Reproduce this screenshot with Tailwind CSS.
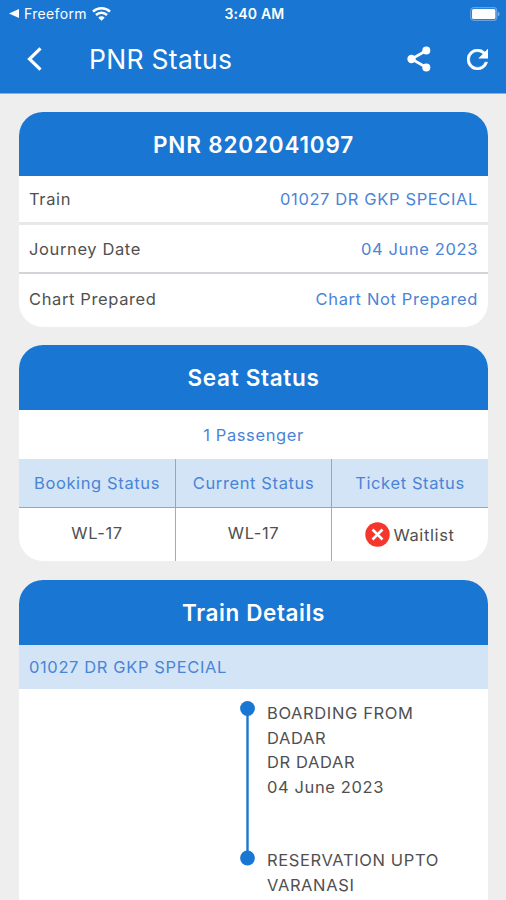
<!DOCTYPE html>
<html lang="en">
<head>
<meta charset="utf-8">
<title>PNR Status</title>
<script src="https://cdn.jsdelivr.net/npm/@tailwindcss/browser@4"></script>
</head>
<body class="h-[900px] w-[506px] overflow-hidden bg-[#eeeeee] font-[Inter,sans-serif] text-[16.500px] tracking-[0.620px] text-[#505050]">
<header class="h-[94px] border-b border-[#7fb2e6] bg-[#1976d2] text-white">
  <div class="grid h-[27px] grid-cols-3 items-center pr-[6px] pl-[9px] text-[14px] leading-none tracking-[0.1px]">
    <div class="flex items-center">
      <svg class="mr-[5px] h-[9px] w-[10px] shrink-0" viewBox="0 0 10 9" fill="currentColor"><path d="M0 4.500 10 0v9z"/></svg>
      <span class="tracking-[0.350px]">Freeform</span>
      <svg class="ml-[5px] h-[14px] w-[19px] shrink-0" viewBox="0 0 19 14" fill="none" stroke="currentColor" stroke-width="2.500"><path d="M1 4.700a12.300 12.300 0 0 1 17 0M4 8a8 8 0 0 1 11 0"/><path d="M9.500 13.800 6.300 10.700a4.500 4.500 0 0 1 6.400 0z" fill="currentColor" stroke="none"/></svg>
    </div>
    <div class="text-center font-semibold tracking-[0.200px]">3:40 AM</div>
    <div class="flex justify-end">
      <svg class="h-[14px] w-[30px]" viewBox="0 0 30 14"><rect x=".7" y=".7" width="26" height="12.600" rx="3" fill="none" stroke="#64a2e0" stroke-width="1.200"/><rect x="2" y="2" width="23.400" height="10" rx="1.500" fill="#fff"/><path d="M27.700 4.500q2 .8 2 2.500t-2 2.500z" fill="#75ade4"/></svg>
    </div>
  </div>
  <div class="flex h-[66px] items-center pr-[18px] pl-[27px]">
    <svg class="h-[24px] w-[15px] -translate-y-[1px]" viewBox="0 0 15 24" fill="none" stroke="currentColor" stroke-width="3.200"><path d="M13.500 1.300 2.500 12l11 10.700"/></svg>
    <h1 class="ml-[47px] flex-1 pb-[1px] text-[26.500px] leading-none tracking-[0.280px]">PNR Status</h1>
    <svg class="h-[26px] w-[24px] -translate-y-[1px]" viewBox="0 0 24 26" fill="currentColor"><path d="M19.500 4.500 4.500 13l15 8.500" fill="none" stroke="currentColor" stroke-width="2.600"/><circle cx="19.300" cy="4.500" r="4"/><circle cx="4.500" cy="13" r="4.200"/><circle cx="19.300" cy="21.500" r="4"/></svg>
    <svg class="ml-[36px] h-[21px] w-[21px] -translate-y-[1px]" viewBox="4 4 16 16" fill="currentColor" stroke="currentColor" stroke-width=".4"><path d="M17.650 6.350A7.960 7.960 0 0 0 12 4a8 8 0 1 0 7.730 10h-2.080A6 6 0 1 1 12 6c1.660 0 3.140.69 4.220 1.780L13 11h7V4z"/></svg>
  </div>
</header>
<main class="flex flex-col gap-[19px] pr-[18px] pl-[19px] pt-[18px]">
  <section class="h-[215px] overflow-hidden rounded-[24px] bg-white">
    <h2 class="flex h-[64px] items-center justify-center bg-[#1976d2] pt-[1px] text-[22.500px] font-semibold tracking-[0.820px] text-white">PNR 8202041097</h2>
    <div class="flex h-[49px] items-center justify-between border-b-3 border-[#e6e8ea] px-[10px] pt-[1px]"><span>Train</span><span class="text-[#4a84d6]">01027 DR GKP SPECIAL</span></div>
    <div class="flex h-[49px] items-center justify-between border-b-2 border-[#d2d5da] px-[10px] pt-[2px]"><span>Journey Date</span><span class="text-[#4a84d6]">04 June 2023</span></div>
    <div class="flex h-[50px] items-center justify-between px-[10px]"><span>Chart Prepared</span><span class="text-[#4a84d6]">Chart Not Prepared</span></div>
  </section>
  <section class="-mt-[1px] h-[216px] overflow-hidden rounded-[24px] bg-white">
    <h2 class="flex h-[65px] items-center justify-center bg-[#1976d2] text-[22.500px] font-semibold tracking-[0.700px] text-white">Seat Status</h2>
    <div class="flex h-[49px] items-center justify-center pt-[2px] text-[#4a84d6]">1 Passenger</div>
    <div class="grid h-[49px] grid-cols-[157px_156px_156px] divide-x divide-[#93a8be] border-b border-[#93a8be] bg-[#d2e4f5] text-center leading-[49px] text-[#4a84d6]">
      <div>Booking Status</div><div>Current Status</div><div>Ticket Status</div>
    </div>
    <div class="grid h-[53px] grid-cols-[157px_156px_156px] divide-x divide-[#a9a9b1] text-center leading-[50px]">
      <div>WL-17</div><div>WL-17</div>
      <div class="flex items-center justify-center gap-[3px]">
        <svg class="h-[25px] w-[25px]" viewBox="0 0 25 25"><circle cx="12.500" cy="12.500" r="12.200" fill="#f5362c"/><path d="m7.500 7.500 10 10m0-10-10 10" stroke="#fff" stroke-width="2.600"/></svg>
        <span>Waitlist</span>
      </div>
    </div>
  </section>
  <section class="h-[340px] overflow-hidden rounded-t-[24px] bg-white">
    <h2 class="flex h-[65px] items-center justify-center bg-[#1976d2] text-[22.500px] font-semibold tracking-[0.600px] text-white">Train Details</h2>
    <div class="flex h-[44px] items-center bg-[#d2e4f5] px-[10px] pt-[1px] text-[#4a84d6]">01027 DR GKP SPECIAL</div>
    <div class="flex pt-[12px] pl-[221px]">
      <svg class="h-[165px] w-[15px] shrink-0" viewBox="0 0 15 165" fill="#1976d2"><path d="M6.300 7.500h2.400v150H6.300z"/><circle cx="7.500" cy="7.500" r="7.400"/><circle cx="7.500" cy="157" r="7.400"/></svg>
      <div class="ml-[12px] leading-[24.500px]">
        <div class="h-[147px]"><p>BOARDING FROM</p><p>DADAR</p><p>DR DADAR</p><p>04 June 2023</p></div>
        <div><p>RESERVATION UPTO</p><p>VARANASI</p></div>
      </div>
    </div>
  </section>
</main>
</body>
</html>
